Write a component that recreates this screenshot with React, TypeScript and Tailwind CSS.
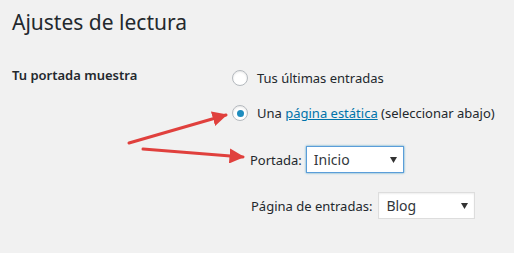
import React from "react";

const font = { fontFamily: '"Segoe UI", "Noto Sans", sans-serif' };

function Radio({ checked }: { checked?: boolean }) {
  return (
    <span className="flex h-4 w-4 shrink-0 items-center justify-center rounded-full border border-[#b4b9be] bg-white shadow-[inset_0_1px_2px_rgba(0,0,0,0.1)]">
      {checked && <span className="h-[7px] w-[7px] rounded-full bg-[#1e8cbe]" />}
    </span>
  );
}

function Select({ value, width, focus }: { value: string; width: string; focus?: boolean }) {
  return (
    <div
      className={`flex h-[27px] items-center justify-between bg-white pl-[7px] pr-[6px] text-[14px] text-[#32373c] ${width} ${
        focus ? "border border-[#5b9dd9] shadow-[0_0_2px_rgba(30,140,190,0.8)]" : "border border-[#ddd] shadow-[inset_0_1px_2px_rgba(0,0,0,0.07)]"
      }`}
    >
      <span>{value}</span>
      <svg width="7" height="6" viewBox="0 0 7 6">
        <path d="M0 0 H7 L3.5 6 z" fill="#333" />
      </svg>
    </div>
  );
}

export default function App() {
  return (
    <div className="relative h-[253px] w-[514px] overflow-hidden bg-[#f1f1f1] text-[#23282d]" style={font}>
      <h1 className="pl-[12px] pt-[8px] text-[21px] font-normal leading-[29px]">Ajustes de lectura</h1>

      <div className="mt-[28px] flex">
        <div className="w-[232px] shrink-0 pl-[12px] text-[13px] font-semibold leading-[20px]">Tu portada muestra</div>

        <div className="flex flex-col pt-[3px] text-[13px] leading-[20px]">
          <label className="flex items-center gap-[9px]">
            <Radio />
            <span>Tus últimas entradas</span>
          </label>
          <label className="mt-[15px] flex items-center gap-[9px]">
            <Radio checked />
            <span>
              Una <span className="text-[#0073aa] underline">página estática</span> (seleccionar abajo)
            </span>
          </label>

          <div className="ml-[18px] mt-[23px] flex items-center gap-[4px]">
            <span>Portada:</span>
            <Select value="Inicio" width="w-[98px]" focus />
          </div>
          <div className="ml-[19px] mt-[19px] flex items-center gap-[6px]">
            <span>Página de entradas:</span>
            <Select value="Blog" width="w-[97px]" />
          </div>
        </div>
      </div>

      <svg className="pointer-events-none absolute left-0 top-0" width="514" height="253">
        <defs>
          <marker id="ah" viewBox="0 0 10 10" refX="9" refY="5" markerWidth="5" markerHeight="5" orient="auto">
            <path d="M0 0 L10 5 L0 10 z" fill="#e0403d" />
          </marker>
        </defs>
        <line x1="129" y1="143" x2="226" y2="115" stroke="#e0403d" strokeWidth="3" strokeLinecap="round" markerEnd="url(#ah)" />
        <line x1="143" y1="149" x2="243" y2="157" stroke="#e0403d" strokeWidth="3" strokeLinecap="round" markerEnd="url(#ah)" />
      </svg>
    </div>
  );
}
